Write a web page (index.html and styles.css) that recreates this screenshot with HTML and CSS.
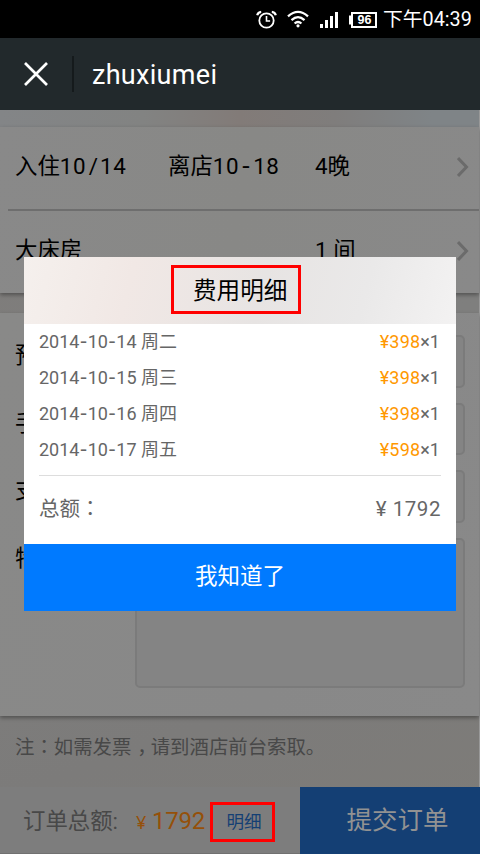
FILE: index.html
```html
<!DOCTYPE html>
<html lang="zh-CN">
<head>
<meta charset="utf-8">
<title>费用明细</title>
<link rel="stylesheet" href="styles.css">
</head>
<body>
<div class="screen">
  <div class="status">
    <svg class="status-icons" width="122" height="20" viewBox="0 0 122 20" fill="none" stroke="#fff">
      <circle cx="10.5" cy="10.5" r="7.2" stroke-width="1.8"/>
      <path d="M10.5 6v5h3.6" stroke-width="1.6"/>
      <path d="M1.2 5.2Q2 2.2 5.2 1.9M15.8 1.9Q19 2.2 19.8 5.2" stroke-width="2.2"/>
      <path d="M32 6.4Q42-2.6 52 6.4M35.5 10.2Q42 4 48.500 10.2M38.600 13.500Q42 10.400 45.400 13.500" stroke-width="2.3"/>
      <circle cx="42" cy="15.800" r="1.600" fill="#fff" stroke="none"/>
      <path d="M65.500 18v-4M70.500 18v-8M75.500 18V6M80.500 18V2" stroke-width="3"/>
      <path d="M96 3h24v14H96zM95 6.500h-1v7h1" stroke-width="2"/>
      <text class="battery" x="108.500" y="14.300" text-anchor="middle">96</text>
    </svg>
    <span class="clock">下午04:39</span>
  </div>
  <header class="titlebar">
    <svg class="close" width="24" height="24" viewBox="0 0 24 24"><path d="M1 1l22 22M23 1L1 23" stroke="#fff" stroke-width="2.700"/></svg>
    <i class="separator"></i>
    <h1 class="title">zhuxiumei</h1>
  </header>
  <main class="page">
    <div class="banner"></div>
    <section class="card stay">
      <div class="row">
        <span class="c1">入住<b>10<i class="slash">/</i>14</b></span><span class="c2">离店<b>10<i class="dash">-</i>18</b></span><span class="c3">4晚</span>
        <svg class="chevron" width="12" height="22" viewBox="0 0 12 22"><path d="M1 2l8.500 9L1 20" fill="none" stroke="#6b6b6b" stroke-width="3"/></svg>
      </div>
      <div class="row second">
        <span class="c1 wide">大床房</span><span class="c3">1 间</span>
        <svg class="chevron" width="12" height="22" viewBox="0 0 12 22"><path d="M1 2l8.500 9L1 20" fill="none" stroke="#6b6b6b" stroke-width="3"/></svg>
      </div>
    </section>
    <section class="card form">
      <div class="field"><span class="label">预</span><div class="input"></div></div>
      <div class="field"><span class="label">手</span><div class="input"></div></div>
      <div class="field"><span class="label">支</span><div class="input"></div></div>
      <div class="field"><span class="label">特</span><div class="input area"></div></div>
    </section>
    <p class="note">注<span class="colon" lang="zh-TW">：</span>如需发票<span class="comma">，</span>请到酒店前台索取。</p>
    <footer class="footer">
      <span class="sum-label">订单总额:</span>
      <span class="yen">¥</span><span class="sum">1792</span>
      <span class="detail mark">明细</span>
      <div class="submit">提交订单</div>
    </footer>
  </main>
  <div class="dialog">
    <div class="dialog-head"><span class="dialog-title mark">费用明细</span></div>
    <div class="days">
      <div class="day"><span>2014<i>-</i>10<i>-</i>14 周二</span><span><em>¥398</em>×1</span></div>
      <div class="day"><span>2014<i>-</i>10<i>-</i>15 周三</span><span><em>¥398</em>×1</span></div>
      <div class="day"><span>2014<i>-</i>10<i>-</i>16 周四</span><span><em>¥398</em>×1</span></div>
      <div class="day"><span>2014<i>-</i>10<i>-</i>17 周五</span><span><em>¥598</em>×1</span></div>
    </div>
    <div class="total"><span>总额<span class="colon" lang="zh-TW">：</span></span><span class="total-sum">¥ 1792</span></div>
    <div class="confirm">我知道了</div>
  </div>
</div>
</body>
</html>
```
FILE: styles.css
```css
* { box-sizing: border-box; margin: 0; padding: 0; }
body { width: 480px; height: 854px; overflow: hidden; background: #000; }
i { font-style: normal; }
.screen {
  position: relative; width: 480px; height: 854px; overflow: hidden;
  font-family: Roboto, "Noto Sans CJK SC", sans-serif; font-weight: 400;
}
.status { height: 38px; display: flex; align-items: center; justify-content: flex-end; padding-right: 9px; background: #000; }
.status-icons { margin: 1px 5px 0 0; }
.battery { font: 700 12.500px "Liberation Sans", sans-serif; fill: #fff; stroke: none; }
.clock { width: 88px; font-size: 19.800px; line-height: 36px; padding-top: 2px; color: #fff; white-space: nowrap; }
.titlebar { height: 72px; display: flex; align-items: center; background: #22292c; padding-left: 24px; }
.separator { width: 2px; height: 36px; margin: 0 18px 0 24px; background: #151a1c; }
.title { font-size: 27px; font-weight: 400; letter-spacing: .3px; line-height: 70px; padding-top: 2px; color: #fff; }
.page { height: 744px; background: linear-gradient(160deg, #7e7b79, #7f7f7e 40%, #7c7b7a 75%, #7e7c78); border-right: 1px solid #999; }
.banner { height: 17px; background: linear-gradient(90deg, #838587, #828382 30%, #827b78 50%, #7f7d7c 70%, #7f8487 90%); }
.card { background: #898989; box-shadow: 0 2px 4px rgba(0,0,0,.35); }
.stay { height: 166px; font-size: 22.400px; color: #000; background: linear-gradient(100deg, #898989, #888886 50%, #898989); }
.row { height: 82px; display: flex; align-items: center; padding: 0 10px 9px 15px; white-space: nowrap; }
.second { height: 84px; margin-left: 8px; padding-left: 7px; border-top: 2px solid #6e6e6e; }
.row b { font-weight: 400; letter-spacing: .600px; }
.slash { margin: 0 1.500px 0 2.500px; }
.dash { margin: 0 2.500px; font-family: "Open Sans", sans-serif; font-size: 26px; line-height: 1; }
.c1 { width: 153px; }
.c2 { width: 147px; }
.wide { width: 300px; }
.chevron { margin: 7px 0 0 auto; }
.form { height: 403px; margin-top: 20px; padding: 22px 14px 0 15px; background: linear-gradient(100deg, #898988, #888888 60%, #898989); }
.field { display: flex; margin-bottom: 15px; }
.label { width: 120px; font-size: 22.400px; line-height: 41px; color: #000; }
.input { width: 330px; height: 52.500px; border: 2px solid #7b7b7b; border-radius: 5px; background: #848484; }
.area { height: 150px; }
.note { height: 71px; padding-left: 15px; font-size: 19.400px; line-height: 63px; color: #484848; white-space: nowrap; }
.colon { font-family: "Noto Sans CJK TC", sans-serif; line-height: 1; }
.comma { padding-left: 6px; letter-spacing: -6px; }
.footer { width: 480px; height: 67px; display: flex; align-items: center; padding-left: 23px; background: #7d7d7d; border-bottom: 1px solid #707070; white-space: nowrap; }
.sum-label { width: 113px; padding-bottom: 2px; font-size: 22.400px; color: #484848; }
.yen { width: 16px; font-family: "Noto Sans", sans-serif; font-size: 18px; color: #955009; padding-top: 3px; }
.sum { width: 58px; font-size: 24px; color: #955009; padding-top: 1px; letter-spacing: -.2px; }
.mark { border: 3px solid #f00; }
.detail { width: 65px; height: 40px; margin-top: 4px; text-align: center; padding-left: 3px; font-size: 17.600px; line-height: 34px; color: #143f74; }
.submit { width: 180px; height: 67px; margin: 0 0 -1px 25px; padding-left: 15px; text-align: center; font-size: 25.500px; line-height: 66px; color: #929292; background: #143f74; }
.dialog { position: absolute; left: 24px; top: 257px; width: 432px; height: 354px; background: #fff; color: #666; }
.dialog-head { height: 67px; padding: 8px 0 0 147px; background: linear-gradient(105deg, #f5f0ed, #f1e8e5 25%, #e7e4e3 55%, #eae9e9 78%, #f3f2f2); }
.dialog-title { display: block; width: 130px; height: 49px; padding-left: 19px; font-size: 23.600px; line-height: 46px; color: #000; }
.days { height: 152px; margin: 0 15px; border-bottom: 1px solid #ddd; }
.day { height: 36px; display: flex; justify-content: space-between; padding-right: 1px; font-size: 18px; line-height: 35px; }
.day i { margin: 0 .600px; font-family: "Open Sans", sans-serif; font-size: 22px; line-height: 1; }
.day em { font-style: normal; color: #ff9800; letter-spacing: .200px; }
.total { height: 68px; display: flex; justify-content: space-between; padding: 0 15px; font-size: 20.500px; line-height: 66px; }
.total-sum { letter-spacing: .550px; }
.confirm { height: 67px; text-align: center; font-size: 22.500px; line-height: 64px; color: #fff; background: #007aff; }
```
